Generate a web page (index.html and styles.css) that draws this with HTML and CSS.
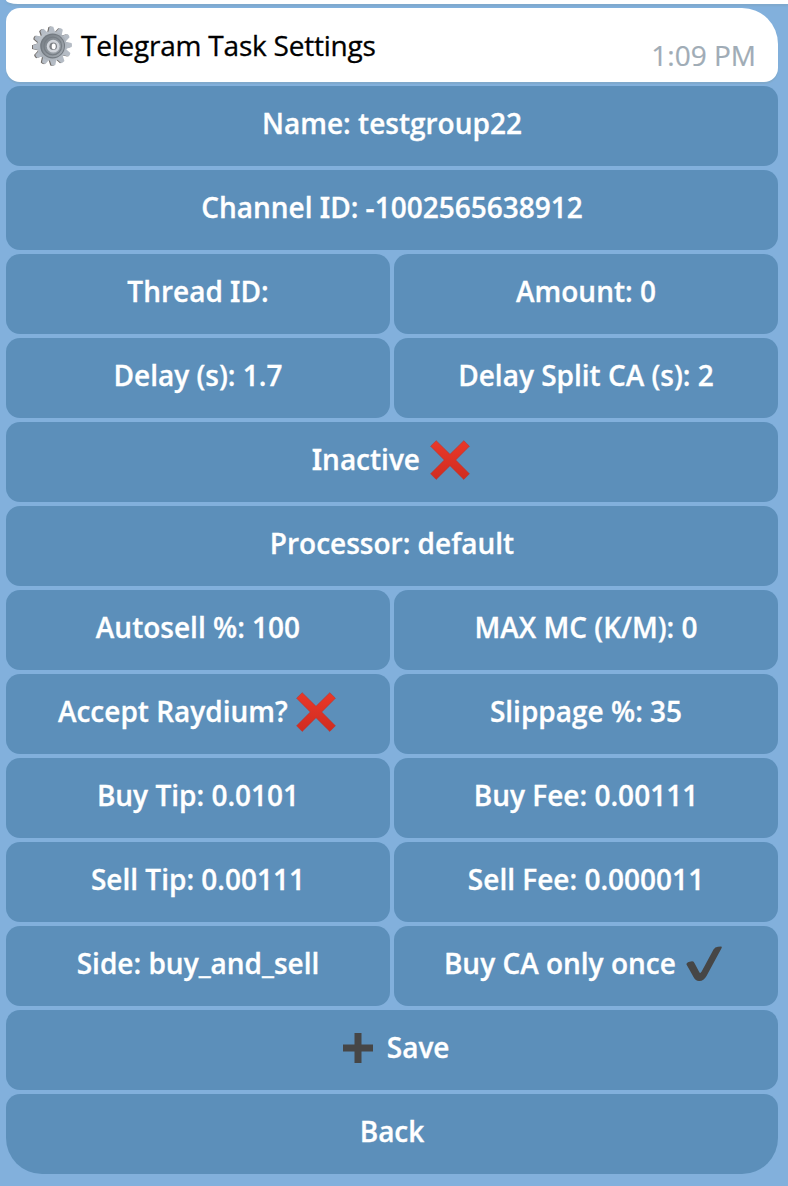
FILE: index.html
```html
<!DOCTYPE html>
<html lang="en">
<head>
<meta charset="utf-8">
<title>Telegram Task Settings</title>
<link rel="stylesheet" href="styles.css">
</head>
<body>
<svg class="defs" width="0" height="0" aria-hidden="true">
  <defs>
    <linearGradient id="red" x1="0" y1="0" x2="0" y2="1"><stop offset="0" stop-color="#ea3829"/><stop offset="1" stop-color="#d02c20"/></linearGradient>
    <linearGradient id="steel" x1="0" y1="0" x2="1" y2="1"><stop offset="0" stop-color="#c3c9d0"/><stop offset=".5" stop-color="#a9b0b8"/><stop offset="1" stop-color="#b9c0c8"/></linearGradient>
    <linearGradient id="dish" x1="0" y1="0" x2="1" y2="1"><stop offset="0" stop-color="#747b82"/><stop offset="1" stop-color="#a6adb4"/></linearGradient>
    <symbol id="cross" viewBox="0 0 40 40"><path d="M6.2.7 20 14.3 33.8.7 39.4 6.2 25.7 20 39.4 33.8 33.8 39.4 20 25.7 6.2 39.4.6 33.8 14.3 20 .6 6.2Z" fill="url(#red)" stroke="#b9382f" stroke-width=".6" stroke-linejoin="round"/></symbol>
    <g id="tooth"><path d="M-3.6-13-1.9-19.2Q0-20 1.9-19.2L3.6-13Z"/></g>
    <g id="teeth">
      <use href="#tooth"/><use href="#tooth" transform="rotate(30)"/><use href="#tooth" transform="rotate(60)"/><use href="#tooth" transform="rotate(90)"/><use href="#tooth" transform="rotate(120)"/><use href="#tooth" transform="rotate(150)"/><use href="#tooth" transform="rotate(180)"/><use href="#tooth" transform="rotate(210)"/><use href="#tooth" transform="rotate(240)"/><use href="#tooth" transform="rotate(270)"/><use href="#tooth" transform="rotate(300)"/><use href="#tooth" transform="rotate(330)"/>
    </g>
  </defs>
</svg>
<main class="chat">
  <div class="previous"></div>
  <header class="message">
    <svg class="gear" viewBox="-20 -20 40 40" aria-hidden="true">
      <use href="#teeth" transform="translate(-.8 .2) rotate(-3)" fill="#716d6a"/>
      <use href="#teeth" transform="translate(.4 0) rotate(-3)" fill="#b5bcc5"/>
      <circle r="14.8" fill="url(#steel)"/>
      <circle cx=".6" r="12.4" fill="#737a81"/>
      <circle cx=".8" r="11.2" fill="url(#dish)"/>
      <circle cx=".8" r="8.8" fill="none" stroke="#777e85" stroke-width="1.2"/>
      <circle cx="1.2" cy=".2" r="6.4" fill="#d0d4da"/>
      <circle cx="1.2" cy=".2" r="3.8" fill="#7d8085"/>
      <ellipse cx="1.7" cy=".4" rx="2" ry="2.8" fill="#fff"/>
    </svg>
    <h1 class="title">Telegram Task Settings</h1>
    <time class="time">1:09 PM</time>
  </header>
  <div class="keyboard">
    <button class="key wide">Name: testgroup22</button>
    <button class="key wide">Channel <span class="slab">I</span>D: -1002565638912</button>
    <button class="key">Thread <span class="slab">I</span>D:</button>
    <button class="key">Amount: 0</button>
    <button class="key">Delay (s): 1.7</button>
    <button class="key">Delay Split CA (s): 2</button>
    <button class="key wide"><span class="slab">I</span>nactive <svg class="cross"><use href="#cross"/></svg></button>
    <button class="key wide">Processor: default</button>
    <button class="key">Autosell %: 100</button>
    <button class="key">MAX MC (K/M): 0</button>
    <button class="key">Accept Raydium? <svg class="cross tight"><use href="#cross"/></svg></button>
    <button class="key">Slippage %: 35</button>
    <button class="key">Buy Tip: 0.0101</button>
    <button class="key">Buy Fee: 0.00111</button>
    <button class="key">Sell Tip: 0.00111</button>
    <button class="key">Sell Fee: 0.000011</button>
    <button class="key">Side: buy_and_sell</button>
    <button class="key">Buy CA only once <svg class="check" viewBox="0 0 36 36"><path d="M.5 18.5Q.2 16.8 2.5 16L6 15.2Q7.8 15 8.7 17.5L13.2 26Q14.200 28 15.5 25.8L27.5 3.5Q29 .7 32 .7L35 .5Q36.3.5 35.5 2.2L20.5 30Q17.500 35.300 13 35 9.500 34.800 7.500 31Z"/></svg></button>
    <button class="key wide"><svg class="plus" viewBox="0 0 30 30"><path d="M11.500 0h7v11.500H30v7H18.500V30h-7V18.500H0v-7h11.500Z"/></svg> Save</button>
    <button class="key wide last">Back</button>
  </div>
</main>
</body>
</html>
```
FILE: styles.css
```css
* { box-sizing: border-box; }
body {
  margin: 0;
  background: #82b0dc;
  font-family: "Open Sans", "Noto Sans", sans-serif;
}
.defs { position: absolute; }
.chat {
  height: 1186px;
  overflow: hidden;
}
.previous {
  height: 4px;
  margin-left: 6px;
  background: #fff;
  border-bottom-left-radius: 12px 4px;
  box-shadow: 0 2px 2px #7fa9cc;
}
.message {
  display: flex;
  align-items: flex-start;
  width: 772px;
  height: 74px;
  margin: 4px 0 0 6px;
  padding: 0 22px 0 26px;
  border-radius: 14px 36px 14px 14px;
  background: #fff;
  box-shadow: 0 2px 1px #7fa9cc;
}
.gear {
  width: 40px;
  height: 40px;
  margin-top: 18px;
}
.title {
  margin: 17px 0 0 9px;
  font-size: 28px;
  line-height: 40px;
  font-weight: 400;
  letter-spacing: -0.22px;
  color: #000;
  -webkit-text-stroke: 0.3px #000;
}
.time {
  margin: 27px 0 0 auto;
  font-size: 28px;
  line-height: 40px;
  color: #a0acb6;
  -webkit-text-stroke: 0.2px #a0acb6;
}
.keyboard {
  display: grid;
  grid-template-columns: 384px 384px;
  grid-auto-rows: 80px;
  gap: 4px;
  margin: 4px 0 0 6px;
}
.key {
  display: flex;
  align-items: center;
  justify-content: center;
  padding: 0 0 6px;
  border: 0;
  border-radius: 14px;
  background: #5c8fba;
  color: #fff;
  font: 600 28px/40px "Open Sans", "Noto Sans", sans-serif;
  -webkit-text-stroke: 0.3px #fff;
  white-space: pre;
}
.slab { font-family: "Noto Sans", "Open Sans", sans-serif; }
.wide { grid-column: span 2; }
.last { border-radius: 14px 14px 36px 36px; }
.cross { width: 40px; height: 40px; margin: 2px 2px 0 3px; }
.tight { margin-left: 1px; }
.check { width: 36px; height: 36px; margin: 2px 6px 0 3px; }
.plus { width: 30px; height: 30px; margin: 2px 7px 0 8px; }
.check, .plus { fill: #464646; }
```
